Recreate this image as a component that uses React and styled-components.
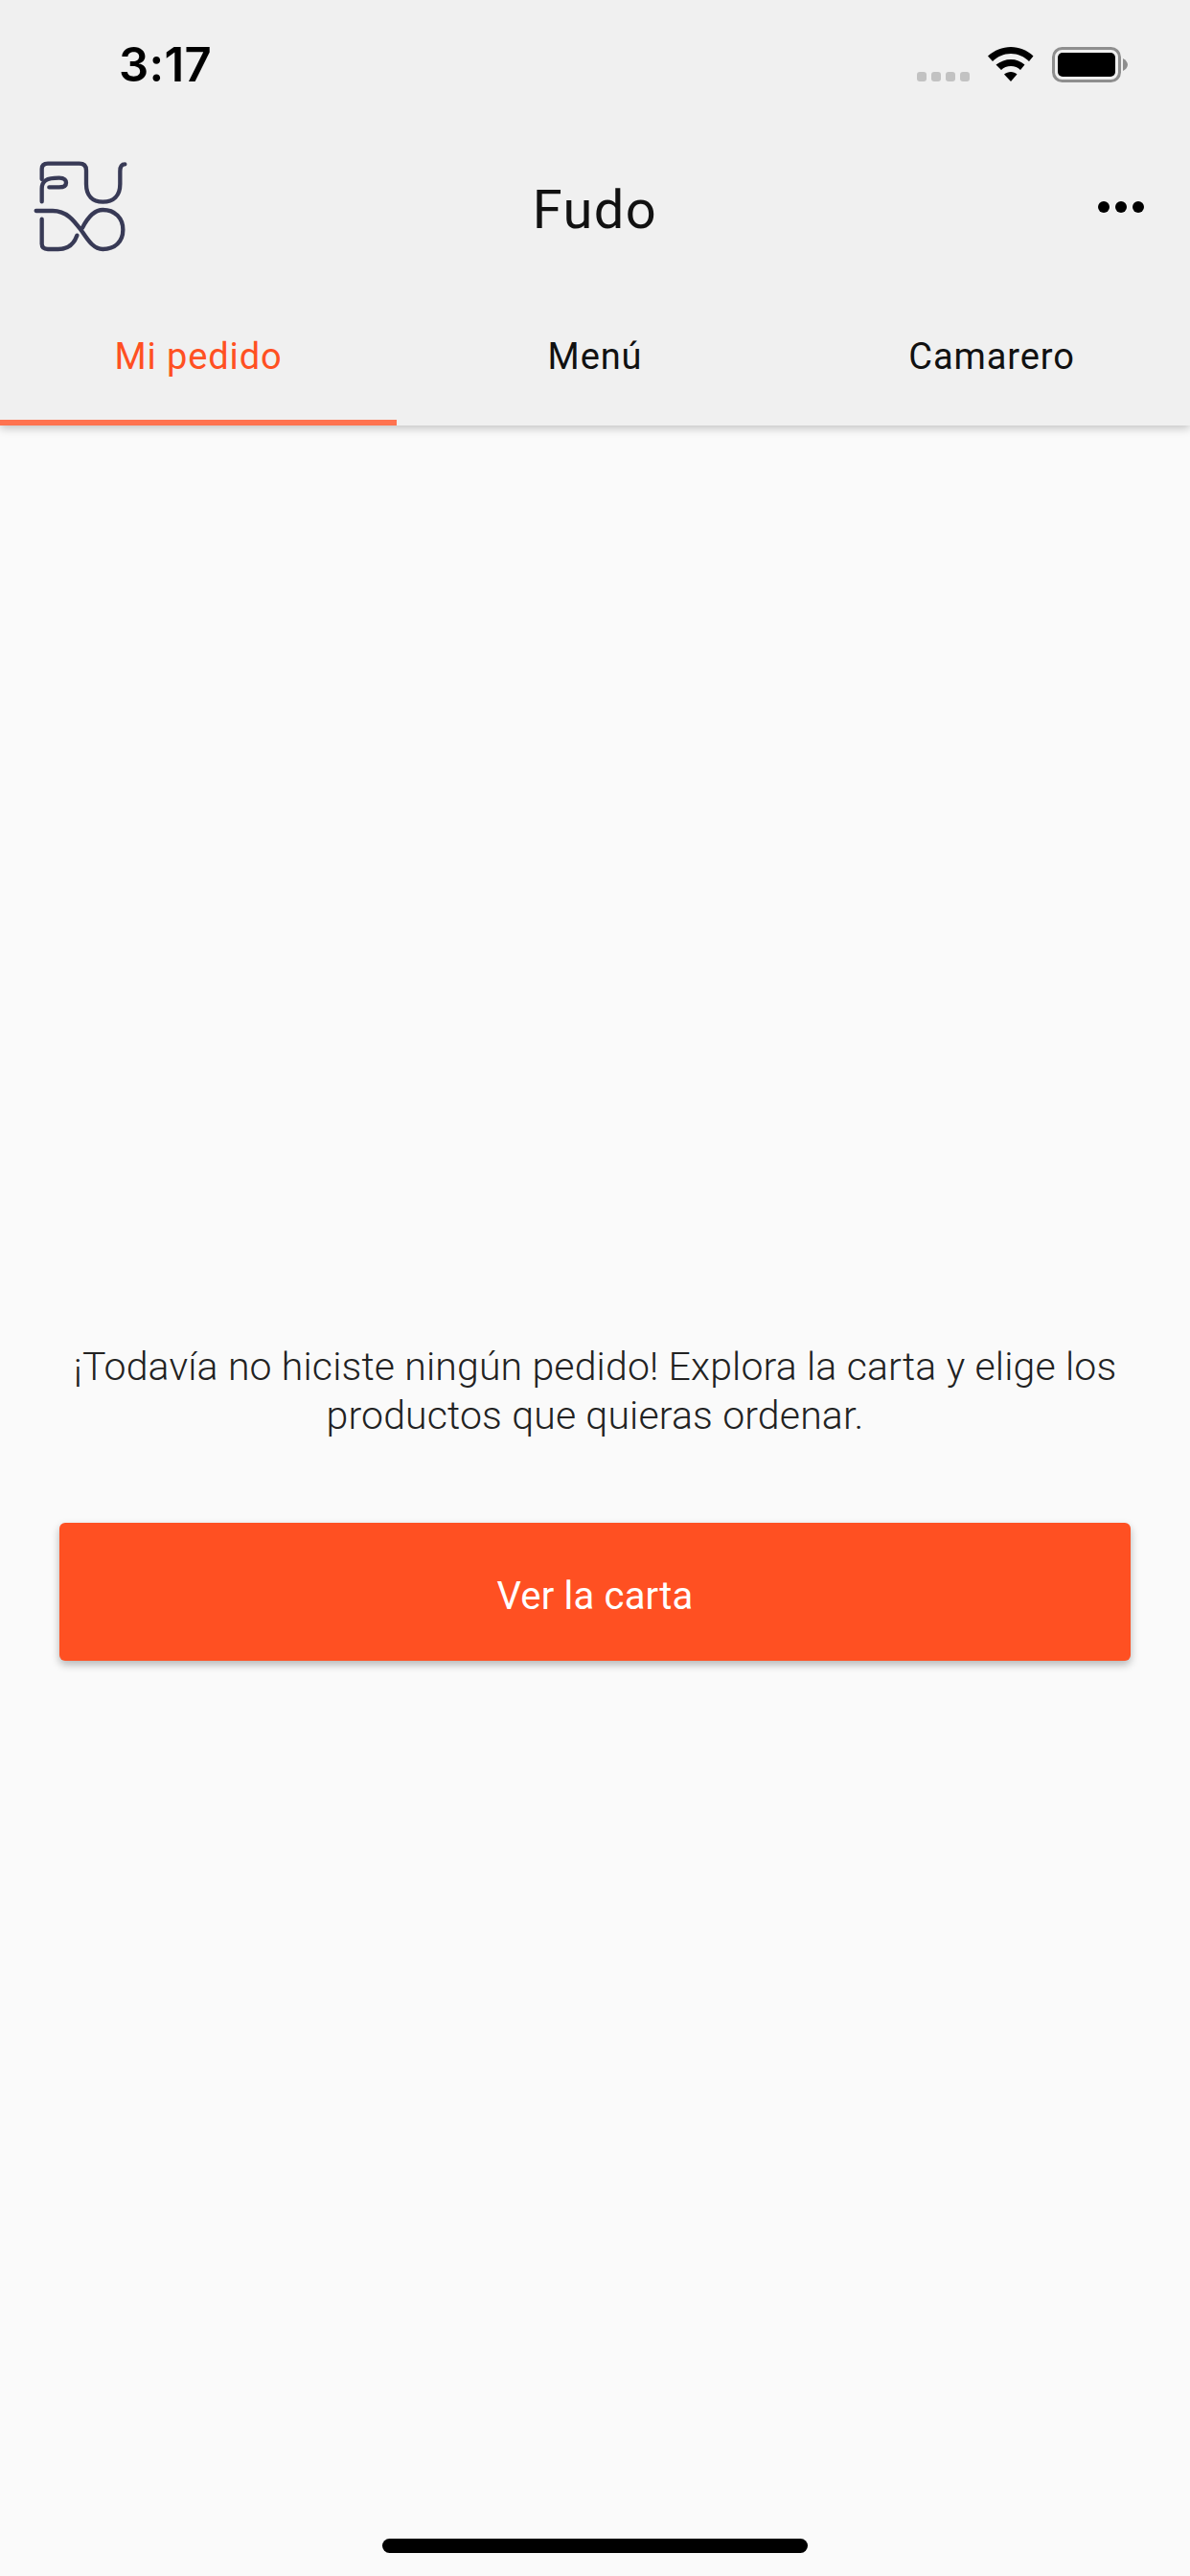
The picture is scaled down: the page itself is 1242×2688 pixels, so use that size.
import React from 'react';
import styled, { createGlobalStyle } from 'styled-components';

const GlobalStyle = createGlobalStyle`
  html, body {
    margin: 0;
    padding: 0;
    background: #fafafa;
  }
  * {
    box-sizing: border-box;
  }
`;

const Screen = styled.div`
  position: relative;
  display: flex;
  flex-direction: column;
  width: 1242px;
  height: 2688px;
  overflow: hidden;
  background: #fafafa;
  font-family: Roboto, "Liberation Sans", sans-serif;
`;

const Header = styled.header`
  position: relative;
  z-index: 1;
  background: #f0f0f0;
  box-shadow: 0 3px 9px rgba(0, 0, 0, 0.22);
`;

const StatusBar = styled.div`
  display: flex;
  align-items: center;
  justify-content: space-between;
  height: 134px;
  padding: 0 65px 0 124px;
`;

const Time = styled.span`
  font-family: Inter, "Liberation Sans", sans-serif;
  font-size: 49px;
  font-weight: 600;
  letter-spacing: 0.3px;
  color: #000;
`;

const StatusIcons = styled.div`
  display: flex;
  align-items: center;
  gap: 19px;
`;

const SignalDots = styled.div`
  display: flex;
  gap: 5px;
  margin-top: 25px;
`;

const SignalDot = styled.i`
  width: 10px;
  height: 10px;
  border-radius: 3px;
  background: #c2c2c2;
`;

const AppBar = styled.div`
  display: grid;
  grid-template-columns: 1fr auto 1fr;
  align-items: center;
  height: 166px;
  padding: 0 35px;
`;

const Title = styled.h1`
  margin: 4px 0 0;
  font-size: 56px;
  font-weight: 400;
  letter-spacing: 1.4px;
  color: #111;
`;

const MoreButton = styled.div`
  display: flex;
  justify-self: end;
  gap: 6px;
  margin: -2px 13px 0 0;
`;

const MoreDot = styled.i`
  width: 12px;
  height: 12px;
  border-radius: 50%;
  background: #000;
`;

const Tabs = styled.nav`
  display: grid;
  grid-template-columns: repeat(3, 1fr);
  height: 144px;
`;

const Tab = styled.div`
  display: flex;
  align-items: center;
  justify-content: center;
  padding-top: 6px;
  font-size: 38px;
  font-weight: 400;
  letter-spacing: 0.9px;
  color: ${props => (props.$active ? '#ff5022' : '#111')};
  border-bottom: 6px solid ${props => (props.$active ? '#ff7350' : 'transparent')};
`;

const Main = styled.main`
  flex: 1;
  display: flex;
  flex-direction: column;
  justify-content: center;
  gap: 86px;
  padding: 0 62px;
`;

const Message = styled.p`
  margin: 0;
  padding-top: 2px;
  font-size: 41px;
  font-weight: 300;
  line-height: 51px;
  letter-spacing: 0.15px;
  text-align: center;
  color: #222;
`;

const CartaButton = styled.button`
  height: 144px;
  padding: 8px 0 0;
  border: 0;
  border-radius: 6px;
  background: #ff5022;
  box-shadow: 0 4px 9px rgba(0, 0, 0, 0.28);
  font-family: inherit;
  font-size: 40px;
  font-weight: 400;
  letter-spacing: 0.2px;
  color: #fff;
`;

const HomeIndicator = styled.div`
  position: absolute;
  left: 399px;
  bottom: 24px;
  width: 444px;
  height: 15px;
  border-radius: 8px;
  background: #000;
`;

const Logo = () => (
  <svg width="100" height="100" viewBox="105 500 300 300" fill="none" stroke="#383a56" strokeWidth="13" strokeLinecap="round" strokeLinejoin="round">
    <path d="M131 630 V590 C131 565 145 556 185 556 C203 556 207 565 207 571 C207 580 200 585 185 585 H154" />
    <path d="M131 560 V528 C131 516 138 511 150 511 H248 C262 511 270 518 270 532 V575 C270 612 290 631 322 631 C355 631 376 612 376 575 V535 C376 520 382 513 391 513" />
    <path d="M113 659 H165 C212 659 235 695 258 725 C278 755 295 779 322 779 C360 779 385 755 385 718 C385 682 360 656 322 656 C292 656 272 685 258 712" />
    <path d="M131 685 V762 C131 774 138 779 150 779 H182 C215 779 232 762 241 736" />
  </svg>
);

const WifiIcon = () => (
  <svg width="48" height="36" viewBox="0 0 48 36">
    <path fill="#000" d="M24 0 C33 0 41 3.500 47.500 9.500 L43 15 C38 10 31.500 7 24 7 C16.500 7 10 10 5 15 L0 9.500 C7 3.500 15 0 24 0 Z" />
    <path fill="#000" d="M24 13 C29.500 13 34.500 15 38.500 18.500 L34 24 C31.500 21.500 28 20 24 20 C20 20 16.500 21.500 14 24 L8.500 18.500 C13.500 15 18.500 13 24 13 Z" />
    <path fill="#000" d="M24 26 C26.500 26 28.800 27 30.500 28.500 L24 36 L17 28.500 C19 27 21.500 26 24 26 Z" />
  </svg>
);

const BatteryIcon = () => (
  <svg width="79" height="37" viewBox="0 0 79 37">
    <rect x="1.500" y="1.500" width="69" height="34" rx="9" fill="none" stroke="#8e8e8e" strokeWidth="3" />
    <rect x="6" y="6" width="60" height="25" rx="5" fill="#000" />
    <path fill="#8e8e8e" d="M74 12 C77 13.500 79 16 79 18.500 C79 21 77 23.500 74 25 Z" />
  </svg>
);

const App = () => {
  return (
    <Screen>
      <GlobalStyle />
      <Header>
        <StatusBar>
          <Time>3:17</Time>
          <StatusIcons>
            <SignalDots>
              <SignalDot />
              <SignalDot />
              <SignalDot />
              <SignalDot />
            </SignalDots>
            <WifiIcon />
            <BatteryIcon />
          </StatusIcons>
        </StatusBar>
        <AppBar>
          <Logo />
          <Title>Fudo</Title>
          <MoreButton>
            <MoreDot />
            <MoreDot />
            <MoreDot />
          </MoreButton>
        </AppBar>
        <Tabs>
          <Tab $active>Mi pedido</Tab>
          <Tab>Menú</Tab>
          <Tab>Camarero</Tab>
        </Tabs>
      </Header>
      <Main>
        <Message>¡Todavía no hiciste ningún pedido! Explora la carta y elige los productos que quieras ordenar.</Message>
        <CartaButton>Ver la carta</CartaButton>
      </Main>
      <HomeIndicator />
    </Screen>
  );
};

export default App;
